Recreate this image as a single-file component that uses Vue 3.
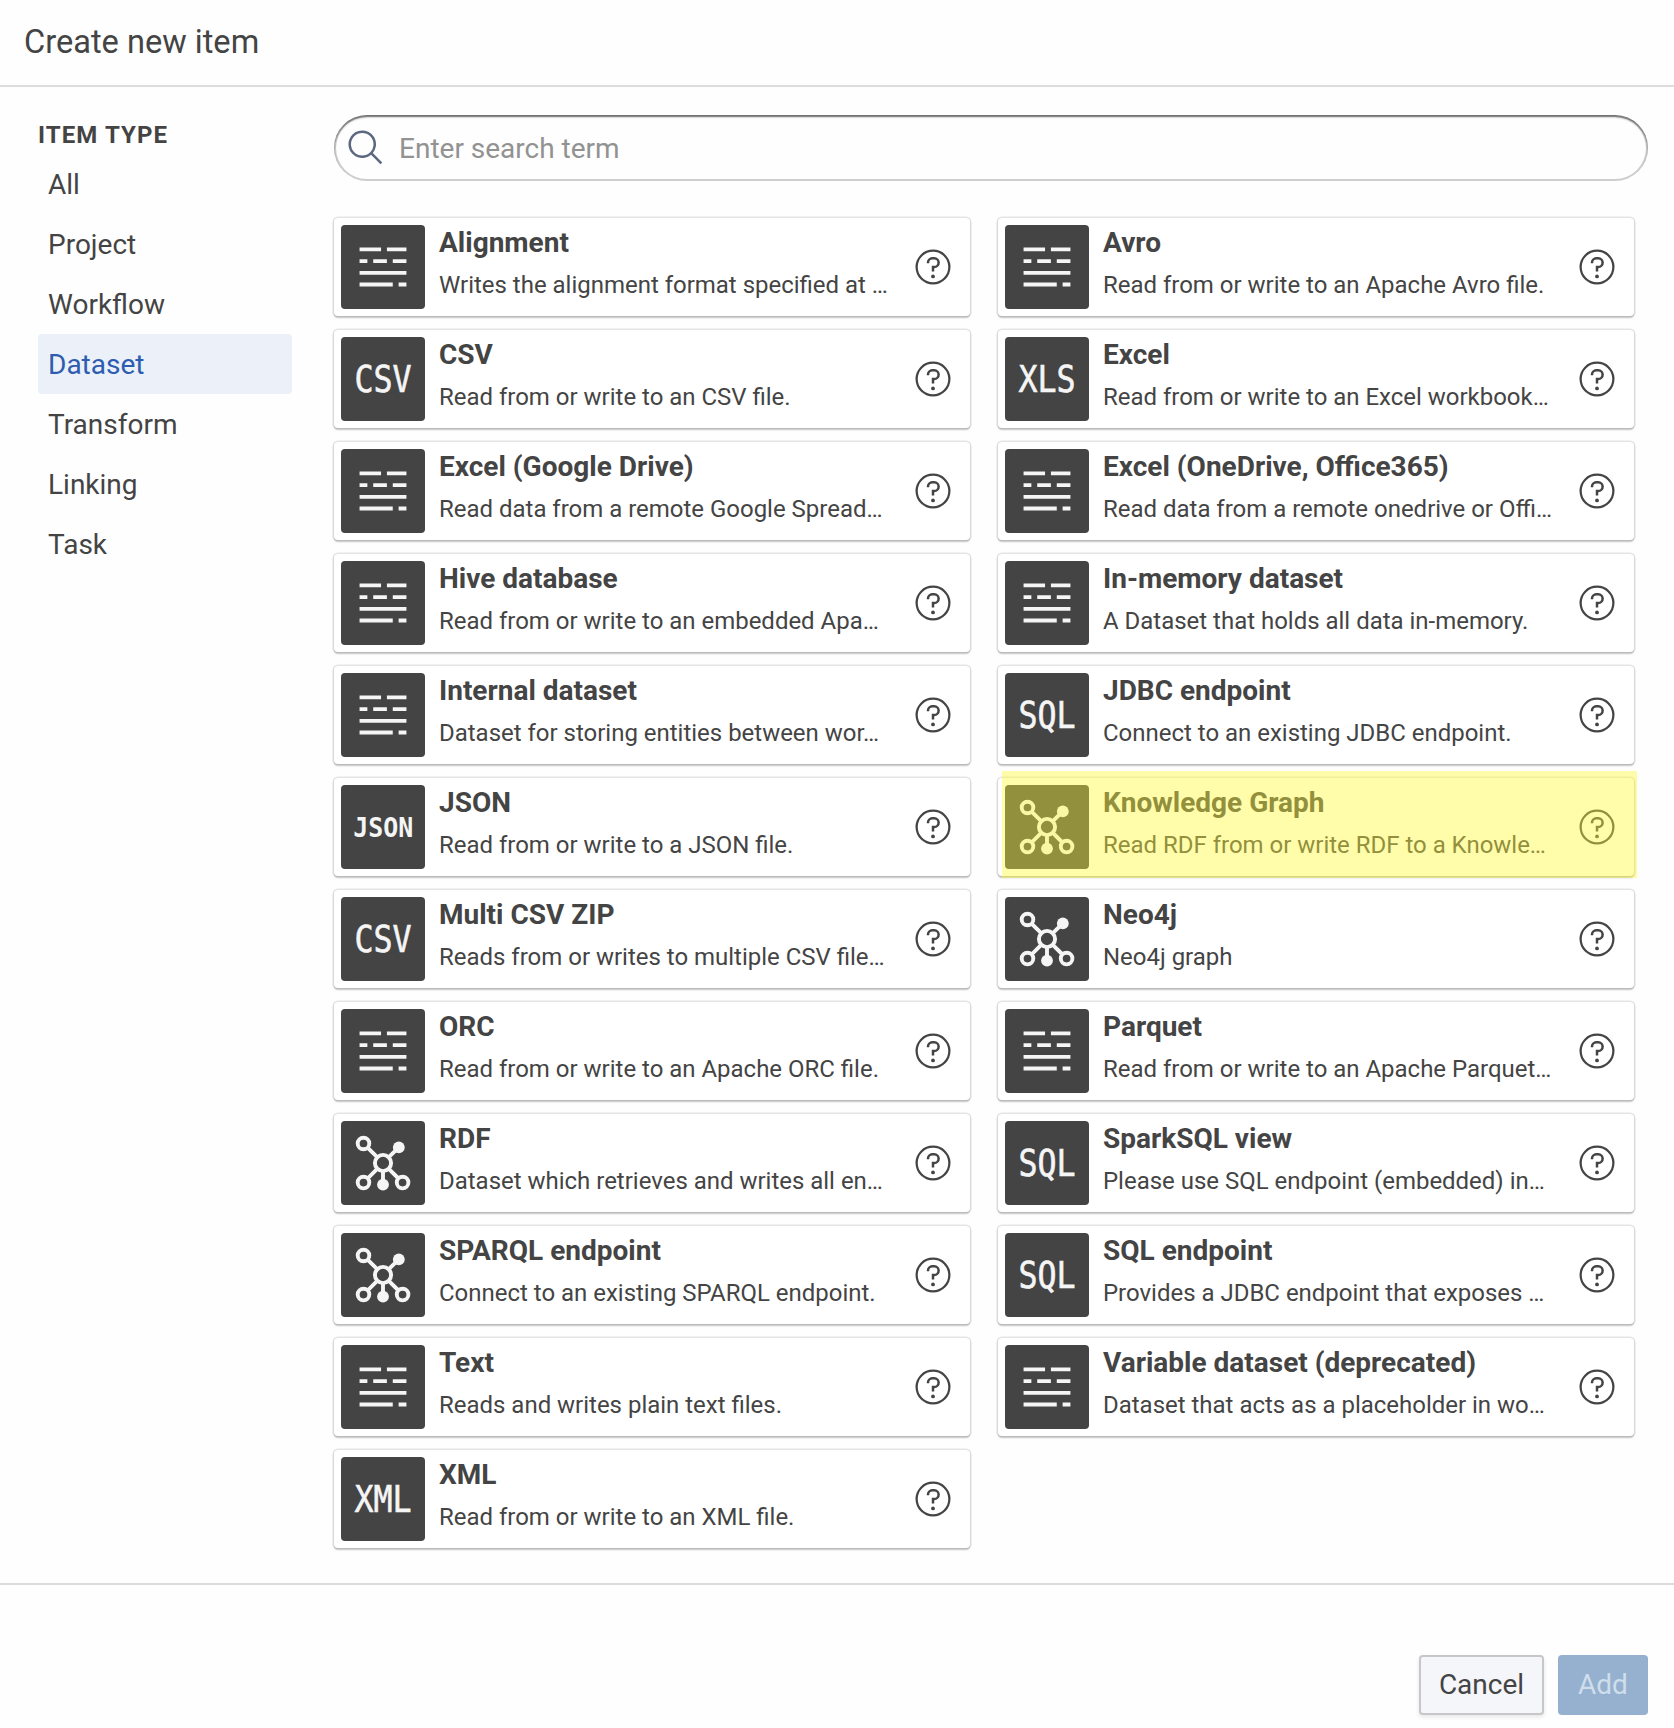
<script setup>
const types = ['All', 'Project', 'Workflow', 'Dataset', 'Transform', 'Linking', 'Task']
const active = 'Dataset'

const items = [
  { title: 'Alignment', text: 'Writes the alignment format specified at …', icon: 'lines' },
  { title: 'Avro', text: 'Read from or write to an Apache Avro file.', icon: 'lines' },
  { title: 'CSV', text: 'Read from or write to an CSV file.', icon: 'CSV' },
  { title: 'Excel', text: 'Read from or write to an Excel workbook…', icon: 'XLS' },
  { title: 'Excel (Google Drive)', text: 'Read data from a remote Google Spread…', icon: 'lines' },
  { title: 'Excel (OneDrive, Office365)', text: 'Read data from a remote onedrive or Offi…', icon: 'lines' },
  { title: 'Hive database', text: 'Read from or write to an embedded Apa…', icon: 'lines' },
  { title: 'In-memory dataset', text: 'A Dataset that holds all data in-memory.', icon: 'lines' },
  { title: 'Internal dataset', text: 'Dataset for storing entities between wor…', icon: 'lines' },
  { title: 'JDBC endpoint', text: 'Connect to an existing JDBC endpoint.', icon: 'SQL' },
  { title: 'JSON', text: 'Read from or write to a JSON file.', icon: 'JSON' },
  { title: 'Knowledge Graph', text: 'Read RDF from or write RDF to a Knowle…', icon: 'graph', marked: true },
  { title: 'Multi CSV ZIP', text: 'Reads from or writes to multiple CSV file…', icon: 'CSV' },
  { title: 'Neo4j', text: 'Neo4j graph', icon: 'graph' },
  { title: 'ORC', text: 'Read from or write to an Apache ORC file.', icon: 'lines' },
  { title: 'Parquet', text: 'Read from or write to an Apache Parquet…', icon: 'lines' },
  { title: 'RDF', text: 'Dataset which retrieves and writes all en…', icon: 'graph' },
  { title: 'SparkSQL view', text: 'Please use SQL endpoint (embedded) in…', icon: 'SQL' },
  { title: 'SPARQL endpoint', text: 'Connect to an existing SPARQL endpoint.', icon: 'graph' },
  { title: 'SQL endpoint', text: 'Provides a JDBC endpoint that exposes …', icon: 'SQL' },
  { title: 'Text', text: 'Reads and writes plain text files.', icon: 'lines' },
  { title: 'Variable dataset (deprecated)', text: 'Dataset that acts as a placeholder in wo…', icon: 'lines' },
  { title: 'XML', text: 'Read from or write to an XML file.', icon: 'XML' },
]
</script>

<template>
  <div class="dialog">
    <header class="head"><h1>Create new item</h1></header>

    <div class="body">
      <nav class="side">
        <h2>Item type</h2>
        <ul>
          <li v-for="t in types" :key="t" :class="{ active: t === active }">{{ t }}</li>
        </ul>
      </nav>

      <main class="main">
        <label class="search">
          <svg viewBox="0 0 32 32" width="40" height="40">
            <path d="M29,27.586l-7.552-7.552a11.018,11.018,0,1,0-1.414,1.414L27.586,29ZM4,13a9,9,0,1,1,9,9A9.01,9.01,0,0,1,4,13Z" />
          </svg>
          <input type="text" placeholder="Enter search term" />
        </label>

        <div class="grid">
          <article v-for="item in items" :key="item.title" class="card" :class="{ marked: item.marked }">
            <svg class="tile" viewBox="0 0 84 84">
              <path
                v-if="item.icon === 'lines'"
                transform="translate(10.75 10.75) scale(1.953)"
                d="M4 6h11v2H4zM18 6h10v2H18zM4 12h4v2H4zM11 12h7v2h-7zM21 12h7v2h-7zM4 18h24v2H4zM4 24h17v2H4zM24 24h4v2h-4z"
              />
              <g v-else-if="item.icon === 'graph'">
                <path class="line" d="M26.6 26.6 36.2 36.2M47.8 36.2 57.8 26.4M36.2 47.8 26.6 57.5M47.8 47.8 57.5 57.5M42 50V62" />
                <circle class="line" cx="42" cy="42" r="8.1" />
                <circle class="line" cx="22.5" cy="22.5" r="5.8" />
                <circle class="line" cx="22.5" cy="61.6" r="5.8" />
                <circle class="line" cx="61.6" cy="61.6" r="5.8" />
                <circle cx="57.8" cy="26.4" r="5.9" />
                <circle cx="42" cy="63.6" r="5.9" />
              </g>
              <text v-else-if="item.icon === 'JSON'" class="code small" x="12.2" y="51.7" textLength="60" lengthAdjust="spacingAndGlyphs">JSON</text>
              <text v-else class="code" x="13.4" y="55.4" textLength="57.2" lengthAdjust="spacingAndGlyphs">{{ item.icon }}</text>
            </svg>
            <div class="info">
              <h3>{{ item.title }}</h3>
              <p>{{ item.text }}</p>
            </div>
            <svg class="help" viewBox="0 0 32 32">
              <path d="M16,2A14,14,0,1,0,30,16,14,14,0,0,0,16,2Zm0,26.2A12.2,12.2,0,1,1,28.2,16,12.2,12.2,0,0,1,16,28.2Z" />
              <circle cx="16" cy="23.5" r="1.5" />
              <path d="M17,8H15.5A4.49,4.49,0,0,0,11,12.49V13h2v-.5A2.5,2.5,0,0,1,15.5,10H17a2.5,2.5,0,0,1,0,5H15v4.5h2V17a4.5,4.5,0,0,0,0-9Z" />
            </svg>
          </article>
        </div>
      </main>
    </div>

    <footer class="foot">
      <button class="cancel">Cancel</button>
      <button class="add" disabled>Add</button>
    </footer>
  </div>
</template>

<style>
body {
  background: #fefefe;
}
</style>

<style scoped>
.dialog {
  display: flex;
  flex-direction: column;
  box-sizing: border-box;
  height: 1728px;
  font-family: Roboto, sans-serif;
  font-size: 28px;
  color: #444;
  overflow: hidden;
}
h1, h2, h3, p, ul {
  margin: 0;
  padding: 0;
  font-weight: 400;
}
.head {
  box-sizing: border-box;
  height: 87px;
  padding-left: 24px;
  border-bottom: 2px solid #dcdcdc;
}
h1 {
  font-size: 32.6px;
  line-height: 84px;
}
.body {
  display: flex;
  flex: 1;
}
.side {
  width: 254px;
  padding: 28px 42px 0 38px;
}
h2 {
  height: 39px;
  font-size: 24px;
  font-weight: 700;
  line-height: 41px;
  letter-spacing: 1.1px;
  text-transform: uppercase;
}
ul {
  list-style: none;
}
li {
  box-sizing: border-box;
  height: 60px;
  padding: 1px 0 0 10px;
  line-height: 60px;
}
li.active {
  background: #ebf0f9;
  color: #2d5cb0;
  border-radius: 4px;
}
.main {
  flex: 1;
  padding: 28px 26px 0 0;
}
.search {
  display: flex;
  align-items: center;
  box-sizing: border-box;
  height: 66px;
  padding-left: 12px;
  border-radius: 33px;
  box-shadow: inset 0 0 0 2px rgba(17, 17, 17, 0.2), inset 0 2px 2px rgba(17, 17, 17, 0.5);
}
.search svg {
  fill: #5c6880;
}
.search input {
  flex: 1;
  padding: 0;
  margin-left: 13px;
  border: 0;
  outline: 0;
  background: none;
  font: inherit;
}
.search input::placeholder {
  color: #929292;
}
.grid {
  display: grid;
  grid-template-columns: 636px 636px;
  grid-auto-rows: 98px;
  gap: 14px 28px;
  margin-top: 37px;
}
.card {
  position: relative;
  display: flex;
  align-items: center;
  box-sizing: border-box;
  padding: 0 17px 0 7px;
  border-radius: 4px;
  background: #fff;
  box-shadow: 0 0 0 1.5px rgba(17, 17, 17, 0.11), 0 2px 2px rgba(17, 17, 17, 0.2);
}
.card.marked::after {
  content: '';
  position: absolute;
  inset: -7px -3px -2px 4px;
  background: rgba(255, 249, 52, 0.42);
}
.tile {
  flex: none;
  width: 84px;
  height: 84px;
  border-radius: 4px;
  background: #444;
  fill: #f5f5f5;
}
.line {
  fill: none;
  stroke: #f5f5f5;
  stroke-width: 3.9;
}
.code {
  font-family: 'DejaVu Sans Mono', monospace;
  font-size: 36.6px;
  stroke: #f5f5f5;
  stroke-width: 0.6;
}
.code.small {
  font-size: 26.2px;
  font-weight: 700;
  stroke-width: 0;
}
.info {
  flex: 1;
  min-width: 0;
  margin-left: 14px;
  padding-bottom: 9px;
  white-space: nowrap;
}
h3 {
  font-size: 28px;
  font-weight: 700;
  line-height: 44px;
}
p {
  font-size: 23.97px;
  line-height: 40px;
}
.help {
  flex: none;
  width: 40px;
  height: 40px;
  fill: #444;
}
.foot {
  display: flex;
  justify-content: flex-end;
  gap: 14px;
  box-sizing: border-box;
  height: 145px;
  padding: 70px 26px 0 0;
  border-top: 2px solid #dcdcdc;
}
button {
  height: 60px;
  padding: 0 0 2px;
  border: 0;
  border-radius: 4px;
  font: inherit;
  color: #444;
}
.cancel {
  width: 125px;
  background: #f5f6f9;
  box-shadow: inset 0 0 0 2px rgba(17, 17, 17, 0.2), 0 2px 4px rgba(17, 17, 17, 0.1);
}
.add {
  width: 90px;
  background: #95b1cf;
  color: #cfdeeb;
}
</style>
